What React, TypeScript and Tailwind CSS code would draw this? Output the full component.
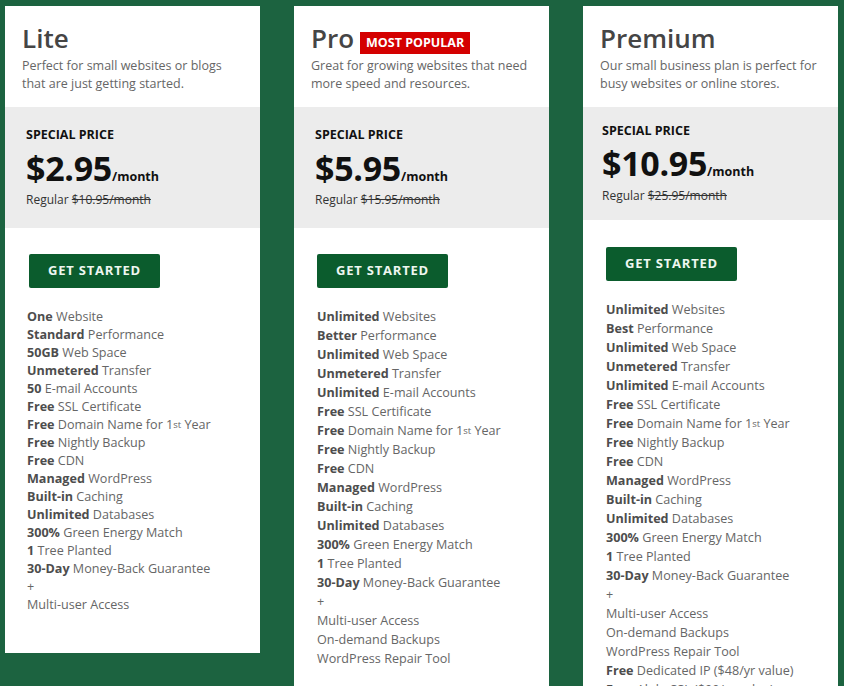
import React from "react";

type Feature = { b?: string; t?: string; sup?: boolean };

type Plan = {
  name: string;
  popular?: boolean;
  desc: string;
  price: string;
  regular: string;
  compact?: boolean;
  lh: string;
  features: Feature[];
};

const base: Feature[] = [
  { b: "Free", t: "SSL Certificate" },
  { b: "Free", t: "Domain Name for 1", sup: true },
  { b: "Free", t: "Nightly Backup" },
  { b: "Free", t: "CDN" },
  { b: "Managed", t: "WordPress" },
  { b: "Built-in", t: "Caching" },
  { b: "Unlimited", t: "Databases" },
  { b: "300%", t: "Green Energy Match" },
  { b: "1", t: "Tree Planted" },
  { b: "30-Day", t: "Money-Back Guarantee" },
  { t: "+" },
  { t: "Multi-user Access" },
];

const plans: Plan[] = [
  {
    name: "Lite",
    desc: "Perfect for small websites or blogs that are just getting started.",
    price: "$2.95",
    regular: "$10.95/month",
    lh: "mt-[20px] leading-[18px]",
    features: [
      { b: "One", t: "Website" },
      { b: "Standard", t: "Performance" },
      { b: "50GB", t: "Web Space" },
      { b: "Unmetered", t: "Transfer" },
      { b: "50", t: "E-mail Accounts" },
      ...base,
    ],
  },
  {
    name: "Pro",
    popular: true,
    desc: "Great for growing websites that need more speed and resources.",
    price: "$5.95",
    regular: "$15.95/month",
    lh: "mt-[19px] leading-[19px]",
    features: [
      { b: "Unlimited", t: "Websites" },
      { b: "Better", t: "Performance" },
      { b: "Unlimited", t: "Web Space" },
      { b: "Unmetered", t: "Transfer" },
      { b: "Unlimited", t: "E-mail Accounts" },
      ...base,
      { t: "On-demand Backups" },
      { t: "WordPress Repair Tool" },
    ],
  },
  {
    name: "Premium",
    desc: "Our small business plan is perfect for busy websites or online stores.",
    price: "$10.95",
    regular: "$25.95/month",
    compact: true,
    lh: "mt-[19px] leading-[19px]",
    features: [
      { b: "Unlimited", t: "Websites" },
      { b: "Best", t: "Performance" },
      { b: "Unlimited", t: "Web Space" },
      { b: "Unmetered", t: "Transfer" },
      { b: "Unlimited", t: "E-mail Accounts" },
      ...base,
      { t: "On-demand Backups" },
      { t: "WordPress Repair Tool" },
      { b: "Free", t: "Dedicated IP ($48/yr value)" },
      { b: "Free", t: "AlphaSSL ($99/yr value)" },
      { b: "Free", t: "Premium Support" },
    ],
  },
];

function PlanCard({ plan }: { plan: Plan }) {
  const lite = plan.name === "Lite";
  return (
    <div className="w-[255px] shrink-0 bg-white pb-[39px]">
      <div className="px-[17px] pt-[15px] pb-[14px]">
        <div className="flex items-center gap-[6px]">
          <h2 className="text-[26px] leading-[35px] font-semibold text-[#454545]">
            {plan.name}
          </h2>
          {plan.popular && (
            <span className="mt-[8px] bg-[#d40000] px-[6px] text-[12.5px] leading-[22px] font-bold text-white">
              MOST POPULAR
            </span>
          )}
        </div>
        <p className="mt-px text-[12.5px] leading-[18px] text-[#666]">
          {plan.desc}
        </p>
      </div>

      <div
        className={
          plan.compact
            ? "bg-[#ececec] px-[19px] pt-[16px] pb-[16px]"
            : "bg-[#ececec] px-[21px] pt-[20px] pb-[20px]"
        }
      >
        <div className="text-[12.5px] leading-[16px] font-bold text-[#111]">
          SPECIAL PRICE
        </div>
        <div
          className={
            plan.compact
              ? "mt-[4px] flex items-baseline text-[#111]"
              : "mt-[5px] flex items-baseline text-[#111]"
          }
        >
          <span className="text-[34px] leading-[40px] font-bold tracking-[-0.3px]">
            {plan.price}
          </span>
          <span className="text-[12.5px] font-bold">/month</span>
        </div>
        <div
          className={
            plan.compact
              ? "mt-[5px] text-[12px] leading-[16px] text-[#333]"
              : "mt-[4px] text-[12px] leading-[16px] text-[#333]"
          }
        >
          Regular <span className="line-through">{plan.regular}</span>
        </div>
      </div>

      <div className={lite ? "px-[22px]" : "px-[23px]"}>
        <button
          className={
            plan.compact
              ? "mt-[27px] h-[34px] w-[131px] rounded-[2px] bg-[#0b5c2d] text-[13px] font-bold tracking-[0.8px] text-[#eef7f0]"
              : lite
                ? "mt-[26px] ml-[2px] h-[34px] w-[131px] rounded-[2px] bg-[#0b5c2d] text-[13px] font-bold tracking-[0.8px] text-[#eef7f0]"
                : "mt-[26px] h-[34px] w-[131px] rounded-[2px] bg-[#0b5c2d] text-[13px] font-bold tracking-[0.8px] text-[#eef7f0]"
          }
        >
          GET STARTED
        </button>
        <ul className={`text-[12.6px] text-[#666] ${plan.lh}`}>
          {plan.features.map((f, i) => (
            <li key={i} className="whitespace-nowrap">
              {f.b && <span className="font-bold text-[#4d4d4d]">{f.b} </span>}
              {f.t}
              {f.sup && (
                <>
                  <sup className="relative -top-[1px] text-[9.5px] leading-none">st</sup> Year
                </>
              )}
            </li>
          ))}
        </ul>
      </div>
    </div>
  );
}

export default function App() {
  return (
    <div
      className="flex min-h-[686px] items-start gap-[34px] bg-[#1c6340] pt-[6px] pl-[5px]"
      style={{ fontFamily: '"Open Sans", "Noto Sans", sans-serif' }}
    >
      {plans.map((p) => (
        <PlanCard key={p.name} plan={p} />
      ))}
    </div>
  );
}
